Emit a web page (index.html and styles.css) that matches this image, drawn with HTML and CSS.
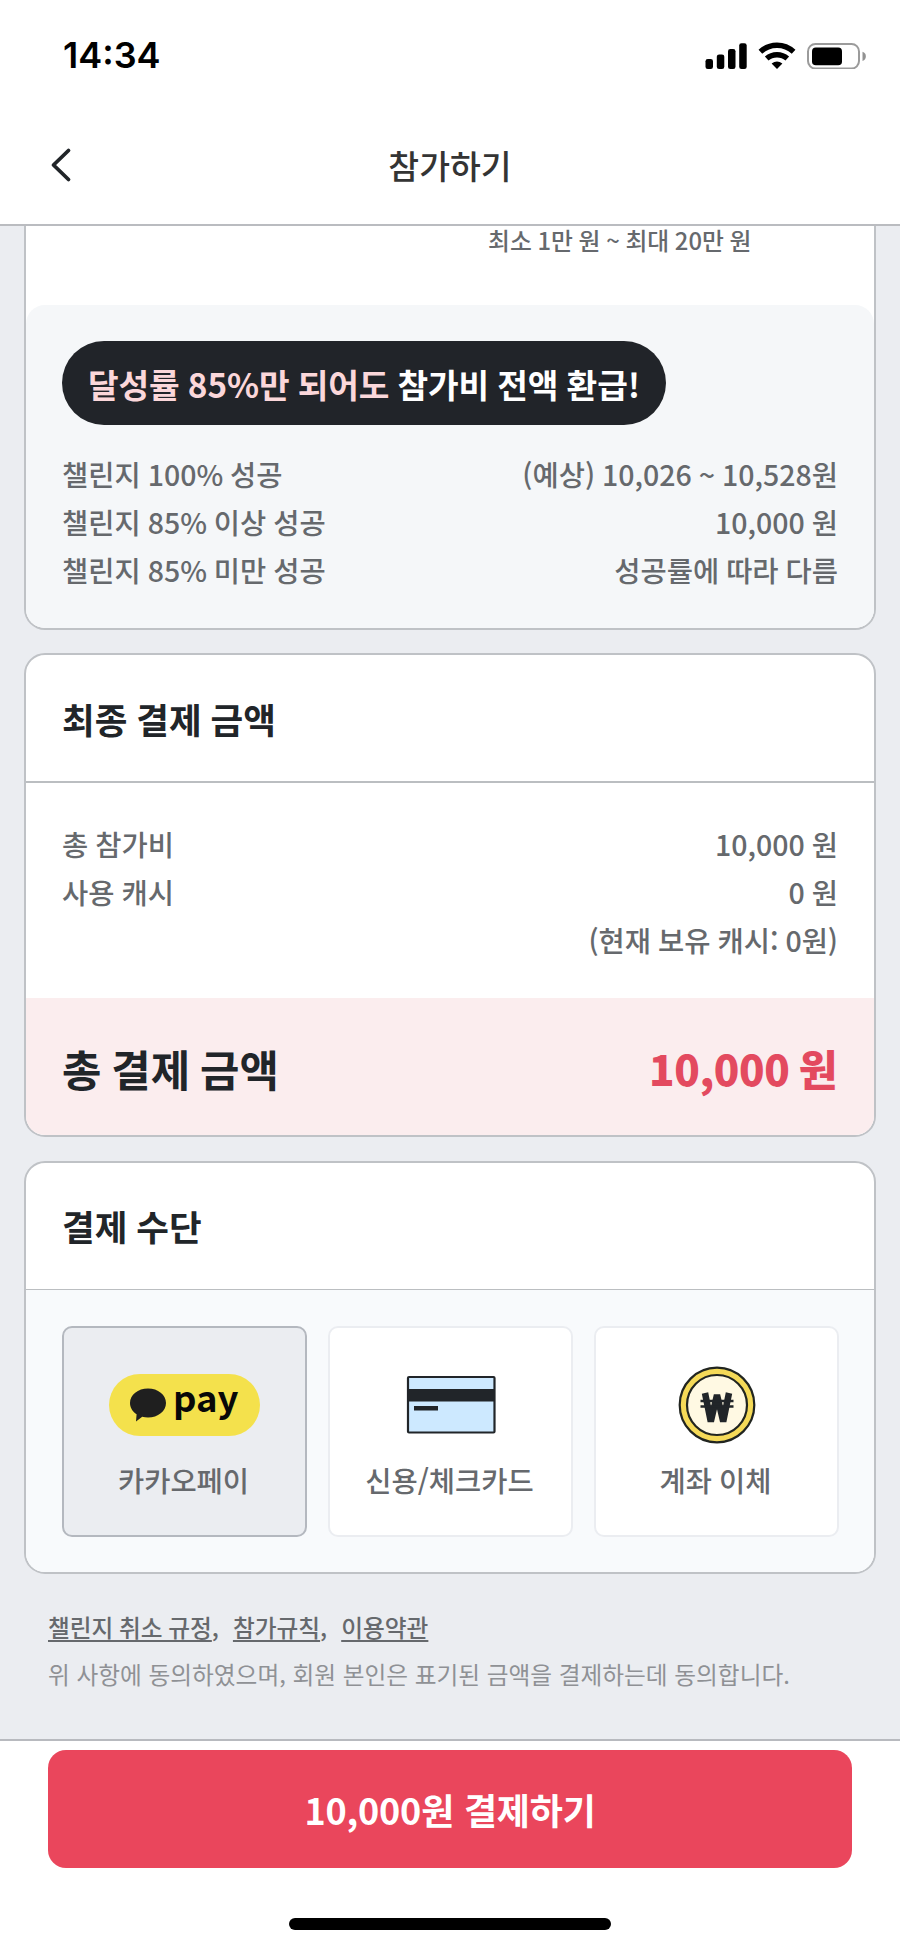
FILE: index.html
```html
<!DOCTYPE html>
<html lang="ko">
<head>
<meta charset="utf-8">
<title>참가하기</title>
<link rel="stylesheet" href="styles.css">
</head>
<body>
<div class="screen">
  <div class="status">
    <span class="clock">14:34</span>
    <svg class="status-icons" width="162" height="28" viewBox="0 0 162 28">
      <rect x="0.5" y="18" width="7.5" height="10" rx="2.3"/>
      <rect x="11.8" y="13.5" width="7.5" height="14.5" rx="2.3"/>
      <rect x="23" y="8" width="7.5" height="20" rx="2.3"/>
      <rect x="34.2" y="2.3" width="7.5" height="25.7" rx="2.3"/>
      <g fill="none" stroke="#000" stroke-width="5.4">
        <path d="M55.4 10.8C64.8 2 79.2 2 88.6 10.8"/>
        <path d="M61.7 17.6C67.5 12.400 76.5 12.400 82.3 17.6"/>
      </g>
      <path d="M66.600 22.600Q72 18.300 77.400 22.600L72 28Z"/>
      <rect x="103" y="2.900" width="51" height="24.700" rx="7.500" fill="none" stroke="#9b9b9b" stroke-width="2"/>
      <rect x="107" y="6.600" width="30" height="17.600" rx="3.800"/>
      <path d="M157.500 10.800C162 12 162 18.800 157.500 20Z" fill="#929292"/>
    </svg>
  </div>
  <header class="nav">
    <svg class="back" width="22" height="36" viewBox="0 0 22 36"><path d="M18.500 3.500 3.500 18l15 14.500"/></svg>
    <h1 class="nav-title">참가하기</h1>
  </header>
  <main class="content">
    <section class="card card-fee">
      <p class="range">최소 1만 원 ~ 최대 20만 원</p>
      <div class="refund">
        <p class="pill"><span><em>달성률 85%만 되어도</em> 참가비 전액 환급!</span></p>
        <dl class="rows">
          <div class="row"><dt>챌린지 100% 성공</dt><dd>(예상) 10,026 ~ 10,528원</dd></div>
          <div class="row"><dt>챌린지 85% 이상 성공</dt><dd>10,000 원</dd></div>
          <div class="row"><dt>챌린지 85% 미만 성공</dt><dd>성공률에 따라 다름</dd></div>
        </dl>
      </div>
    </section>
    <section class="card card-amount">
      <h2 class="card-title">최종 결제 금액</h2>
      <dl class="rows amount-rows">
        <div class="row"><dt>총 참가비</dt><dd>10,000 원</dd></div>
        <div class="row"><dt>사용 캐시</dt><dd>0 원</dd></div>
        <div class="row"><dt></dt><dd>(현재 보유 캐시: 0원)</dd></div>
      </dl>
      <div class="total"><span>총 결제 금액</span><strong>10,000 원</strong></div>
    </section>
    <section class="card card-method">
      <h2 class="card-title">결제 수단</h2>
      <div class="methods">
        <div class="method selected">
          <div class="icon">
            <div class="kakao">
              <svg width="38" height="34" viewBox="0 0 38 34"><path d="M19 .5C29 .5 37 6.700 37 15s-8 14.500-18 14.500c-2 0-4-.2-5.800-.700L7 33.500l.600-7.300C3.400 23.500 1 19.500 1 15 1 6.700 9 .5 19 .5Z" fill="#1f1f1f"/></svg>
              <span class="pay">pay</span>
            </div>
          </div>
          <span>카카오페이</span>
        </div>
        <div class="method">
          <div class="icon">
            <svg width="90" height="60" viewBox="0 0 90 60">
              <rect x="2" y="2" width="86.500" height="55.500" rx="1" fill="#cde9ff" stroke="#212529" stroke-width="2.200"/>
              <path d="M2 14h86v12.500H2zM8 31h24v4.500H8z" fill="#212529"/>
            </svg>
          </div>
          <span>신용/체크카드</span>
        </div>
        <div class="method">
          <div class="icon">
            <svg width="78" height="78" viewBox="0 0 78 78">
              <circle cx="39" cy="39" r="37.300" fill="#f5da58" stroke="#212520" stroke-width="2.200"/>
              <circle cx="39" cy="39" r="30" fill="#fff9e3" stroke="#212520" stroke-width="2.200"/>
              <g fill="none" stroke="#212529">
                <path d="M27 27 32.800 55.500 39 29l6.200 26.500L51 27" stroke-width="6.500" stroke-linejoin="bevel"/>
                <path d="M22.500 35h33M22.500 40.500h33" stroke-width="2.400"/>
              </g>
            </svg>
          </div>
          <span>계좌 이체</span>
        </div>
      </div>
    </section>
    <div class="terms">
      <p class="links"><u>챌린지 취소 규정</u>,<u class="next">참가규칙</u>,<u class="next">이용약관</u></p>
      <p class="agree">위 사항에 동의하였으며, 회원 본인은 표기된 금액을 결제하는데 동의합니다.</p>
    </div>
  </main>
  <footer class="bottom">
    <div class="button">10,000원 결제하기</div>
    <div class="home"></div>
  </footer>
</div>
</body>
</html>
```
FILE: styles.css
```css
* { box-sizing: border-box; margin: 0; padding: 0; }
body { background: #fff; font-family: "Noto Sans CJK KR", sans-serif; color: #212529; white-space: nowrap; }
em { font-style: normal; }
.screen { width: 900px; height: 1949px; display: flex; flex-direction: column; overflow: hidden; }
.status { height: 111px; padding: 0 33px 2px 63px; display: flex; align-items: center; justify-content: space-between; }
.clock { font: 600 36px/44px Inter, sans-serif; color: #000; letter-spacing: 0; }
.status-icons { display: block; }
.nav { height: 115px; border-bottom: 2px solid #babcc0; padding: 0 50px 6px; display: grid; grid-template-columns: 100px 1fr 100px; align-items: center; }
.back { display: block; fill: none; stroke: #212529; stroke-width: 3.800; stroke-linecap: round; stroke-linejoin: round; }
.nav-title { font-size: 33.500px; line-height: 44px; font-weight: 500; color: #343434; text-align: center; }
.content { height: 1513px; background: #ebedf1; padding: 0 24px; }
.card { border: 2px solid #bfc2c6; border-radius: 21px; background: #fff; overflow: hidden; }
.card-fee { height: 404px; border-top: 0; border-radius: 0 0 21px 21px; overflow: visible; }
.range { height: 79px; padding: 0 0 0 462px; font-size: 23.800px; line-height: 28px; font-weight: 500; color: #66696d; word-spacing: -1px; }
.refund { height: 323px; background: #f5f7f9; border-radius: 19px; padding: 36px 36px 0; }
.pill { width: 604px; height: 84px; border-radius: 42px; background: #212429; color: #fff; font-size: 33.300px; line-height: 86px; font-weight: 700; text-align: center; word-spacing: -1px; letter-spacing: -0.1px; }
.pill em { color: #fbd7da; }
.rows { font-size: 28.500px; line-height: 48px; font-weight: 500; color: #66696d; word-spacing: -1px; }
.row { height: 48.200px; display: flex; justify-content: space-between; }
.refund .rows { margin-top: 25px; }
.card-amount { height: 484px; margin-top: 23px; }
.card-title { height: 128px; border-bottom: 2px solid #bbbec1; padding-left: 36px; font-size: 35.500px; line-height: 128px; font-weight: 700; word-spacing: -1px; }
.amount-rows { height: 215px; padding: 37px 36px 0; }
.total { height: 137px; background: #fbedee; padding: 0 37px 0 36px; display: flex; justify-content: space-between; font-size: 42.800px; line-height: 140px; font-weight: 700; word-spacing: -2px; }
.total strong { color: #e34a5f; font-size: 42px; letter-spacing: -0.400px; }
.card-method { height: 413px; margin-top: 24px; }
.card-method .card-title { height: 127px; border-bottom-width: 1px; line-height: 126px; }
.methods { height: 284px; background: #f8fafc; padding: 36px 35px 0 36px; display: grid; grid-template-columns: repeat(3, 245px); justify-content: space-between; }
.method { height: 211px; background: #fff; border: 2px solid #ebedf1; border-radius: 10px; display: flex; flex-direction: column; align-items: center; padding-top: 38px; font-size: 28.500px; line-height: 42px; font-weight: 500; color: #66696d; word-spacing: -1px; }
.method > span { margin-right: 2px; }
.selected { background: #ebedf1; border-color: #b4b8bf; }
.icon { height: 78px; display: flex; align-items: center; margin-bottom: 15px; }
.icon svg { display: block; }
.kakao { width: 151px; height: 62px; border-radius: 31px; background: #f4e14c; display: flex; align-items: center; padding-left: 20px; }
.pay { font: 700 36.500px/40px "Noto Sans CJK KR", sans-serif; color: #080808; margin: -17px 0 0 6px; }
.terms { padding: 33px 24px 0; font-size: 23.700px; font-weight: 500; }
.links { line-height: 41px; color: #66696d; word-spacing: -1px; }
.links u { text-decoration: underline; text-decoration-thickness: 2px; text-underline-offset: 3px; }
.links .next { margin-left: 14px; }
.agree { line-height: 40px; margin-top: 6px; color: #8f9195; font-weight: 400; }
.bottom { height: 210px; border-top: 2px solid #b8babf; background: #fff; display: flex; flex-direction: column; align-items: center; padding-top: 9px; }
.button { width: 804px; height: 118px; border-radius: 18px; background: #ea465c; color: #fff; font-size: 36px; line-height: 118px; font-weight: 700; text-align: center; letter-spacing: -0.200px; }
.home { width: 322px; height: 12px; border-radius: 6px; background: #000; margin-top: 50px; }
```
